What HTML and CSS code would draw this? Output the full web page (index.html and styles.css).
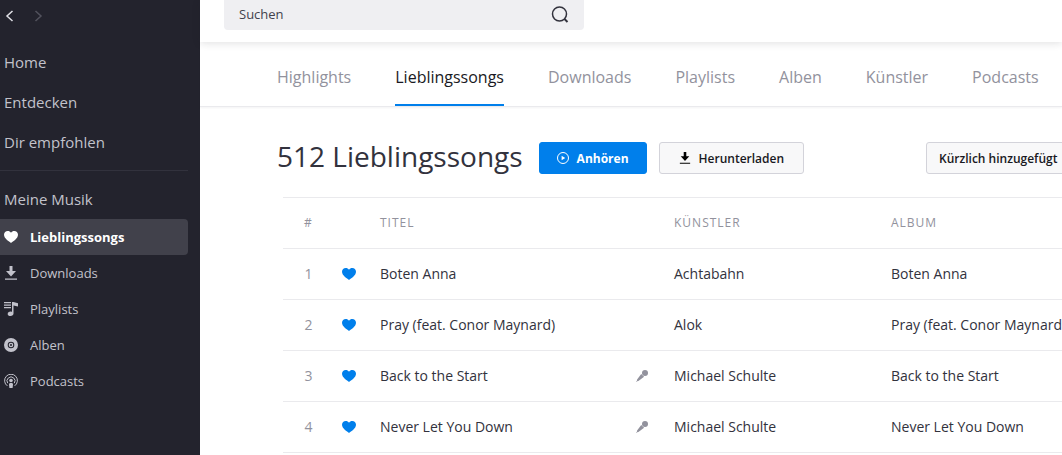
FILE: index.html
```html
<!DOCTYPE html>
<html lang="de">
<head>
    <meta charset="UTF-8">
    <meta name="viewport" content="width=device-width, initial-scale=1.0">
    <title>Lieblingssongs</title>
    <link rel="stylesheet" href="styles.css">
</head>
<body>

    <!-- Shared icons -->
    <svg class="sprite" aria-hidden="true">
        <symbol id="heart" viewBox="0 0 14 12">
            <path d="M7 12C5 10.600 0 7.500 0 3.800 0 1.500 1.700 0 3.700 0 5.100 0 6.300.700 7 1.700 7.700.700 8.900 0 10.300 0 12.300 0 14 1.500 14 3.800 14 7.500 9 10.600 7 12z"/>
        </symbol>
        <symbol id="download" viewBox="0 0 14 14">
            <path d="M5.500 0h3v5H12L7 10.500 2 5h3.500zM1 12.500h12v1.300H1z"/>
        </symbol>
        <symbol id="mic" viewBox="0 0 12 12">
            <circle cx="9" cy="3" r="3"/>
            <path d="M5.200 3.900l2.900 2.900-5.700 4.100-1.300.300L.300 12 0 11.700l.900-1 .200-1.300z"/>
        </symbol>
    </svg>

    <aside class="sidebar">
        <div class="history">
            <button type="button" aria-label="Zurück"><svg width="12" height="12" viewBox="0 0 12 12"><path d="M8.500 1L3 6l5.500 5"/></svg></button>
            <button type="button" aria-label="Vor" disabled><svg width="12" height="12" viewBox="0 0 12 12"><path d="M3.500 1L9 6l-5.500 5"/></svg></button>
        </div>

        <nav class="main-nav">
            <a href="#">Home</a>
            <a href="#">Entdecken</a>
            <a href="#">Dir empfohlen</a>
        </nav>

        <nav class="my-music">
            <a class="my-music-title" href="#">Meine Musik</a>
            <a class="item active" href="#"><svg class="icon" viewBox="0 0 14 14"><use href="#heart" x="0" y="1" width="14" height="12"/></svg>Lieblingssongs</a>
            <a class="item" href="#"><svg class="icon"><use href="#download"/></svg>Downloads</a>
            <a class="item" href="#"><svg class="icon" viewBox="0 0 14 14"><path d="M0 0h7v1.200H0zM0 2.500h7v1.200H0zM0 5h7v1.200H0zM8 0h1.500l4.500 1.200V4.500L9.500 3.400V11.500C9.500 13 8.300 14 6.500 14 4.900 14 3.700 13.200 3.700 11.900 3.700 10.500 5 9.600 6.500 9.600 7.100 9.600 7.600 9.700 8 9.900z"/></svg>Playlists</a>
            <a class="item" href="#"><svg class="icon" viewBox="0 0 14 14"><path fill-rule="evenodd" d="M7 0a7 7 0 1 1 0 14A7 7 0 0 1 7 0zM7 3.700a3.300 3.300 0 1 0 0 6.600 3.300 3.300 0 0 0 0-6.600zM7 4.700a2.300 2.300 0 1 1 0 4.600 2.300 2.300 0 0 1 0-4.600zM7 6a1 1 0 1 0 0 2 1 1 0 0 0 0-2z"/></svg>Alben</a>
            <a class="item" href="#"><svg class="icon" viewBox="0 0 14 14"><circle cx="7" cy="6.500" r="1.800"/><path d="M5 10.200C5 9.300 5.800 9 7 9s2 .300 2 1.200L8.600 14H5.400z"/><path class="wave" d="M3.400 11.900a6.400 6.400 0 1 1 7.200 0M3.700 9.200a4 4 0 1 1 6.600 0"/></svg>Podcasts</a>
        </nav>
    </aside>

    <main class="content">
        <header class="topbar">
            <form class="search">
                <input type="search" placeholder="Suchen" aria-label="Suchen">
                <button type="submit" aria-label="Suche starten"><svg width="18" height="18" viewBox="0 0 18 18"><circle cx="8.500" cy="8" r="7"/><path d="M13.500 13l3 3"/></svg></button>
            </form>
        </header>

        <nav class="tabs">
            <a href="#">Highlights</a>
            <a class="active" href="#">Lieblingssongs</a>
            <a href="#">Downloads</a>
            <a href="#">Playlists</a>
            <a href="#">Alben</a>
            <a href="#">Künstler</a>
            <a href="#">Podcasts</a>
        </nav>

        <div class="toolbar">
            <h1>512 Lieblingssongs</h1>
            <button class="btn primary" type="button"><svg width="12" height="12" viewBox="0 0 12 12"><circle cx="6" cy="6" r="5.500"/><path d="M4.600 3.800L8.200 6 4.600 8.200z"/></svg>Anhören</button>
            <button class="btn" type="button"><svg width="12" height="12"><use href="#download"/></svg>Herunterladen</button>
            <select class="btn sort" aria-label="Sortierung">
                <option>Kürzlich hinzugefügt</option>
            </select>
        </div>

        <table class="songs">
            <thead>
                <tr>
                    <th class="num">#</th>
                    <th class="fav"></th>
                    <th class="title">Titel</th>
                    <th class="lyrics"></th>
                    <th class="artist">Künstler</th>
                    <th class="album">Album</th>
                </tr>
            </thead>
            <tbody>
                <tr>
                    <td class="num">1</td>
                    <td class="fav"><button type="button" aria-label="Boten Anna entfernen"><svg class="heart"><use href="#heart"/></svg></button></td>
                    <td>Boten Anna</td>
                    <td class="lyrics"></td>
                    <td>Achtabahn</td>
                    <td>Boten Anna</td>
                </tr>
                <tr>
                    <td class="num">2</td>
                    <td class="fav"><button type="button" aria-label="Pray entfernen"><svg class="heart"><use href="#heart"/></svg></button></td>
                    <td>Pray (feat. Conor Maynard)</td>
                    <td class="lyrics"></td>
                    <td>Alok</td>
                    <td>Pray (feat. Conor Maynard)</td>
                </tr>
                <tr>
                    <td class="num">3</td>
                    <td class="fav"><button type="button" aria-label="Back to the Start entfernen"><svg class="heart"><use href="#heart"/></svg></button></td>
                    <td>Back to the Start</td>
                    <td class="lyrics"><button type="button" aria-label="Songtext"><svg class="mic"><use href="#mic"/></svg></button></td>
                    <td>Michael Schulte</td>
                    <td>Back to the Start</td>
                </tr>
                <tr>
                    <td class="num">4</td>
                    <td class="fav"><button type="button" aria-label="Never Let You Down entfernen"><svg class="heart"><use href="#heart"/></svg></button></td>
                    <td>Never Let You Down</td>
                    <td class="lyrics"><button type="button" aria-label="Songtext"><svg class="mic"><use href="#mic"/></svg></button></td>
                    <td>Michael Schulte</td>
                    <td>Never Let You Down</td>
                </tr>
            </tbody>
        </table>
    </main>

</body>
</html>
```
FILE: styles.css
```css
* {
    box-sizing: border-box;
}

body {
    margin: 0;
    display: flex;
    min-height: 100vh;
    font-family: 'Open Sans', sans-serif;
    font-size: 14px;
    color: #32323d;
    background: #fff;
    overflow: hidden;
}

a {
    color: inherit;
    text-decoration: none;
}

button, input, select {
    font-family: inherit;
}

button {
    padding: 0;
    border: none;
    background: none;
    cursor: pointer;
}

svg {
    display: block;
    flex-shrink: 0;
}

.sprite {
    position: absolute;
    width: 0;
    height: 0;
}

/* Sidebar */
.sidebar {
    flex: 0 0 200px;
    padding-right: 12px;
    background: #23232d;
    color: #c2c2cb;
}

.history {
    display: flex;
    gap: 16px;
    height: 42px;
    padding: 10px 4px;
}

.history button {
    width: 12px;
    height: 12px;
}

.history path {
    fill: none;
    stroke: #e0e0e6;
    stroke-width: 1.5;
}

.history button:disabled path {
    stroke: #52525d;
}

.main-nav {
    padding-bottom: 8px;
    border-bottom: 1px solid #32323d;
}

.main-nav a {
    display: block;
    padding-left: 4px;
    font-size: 15px;
    line-height: 40px;
}

.my-music {
    padding-top: 8px;
}

.my-music-title {
    display: block;
    padding-left: 4px;
    font-size: 15px;
    line-height: 40px;
}

.item {
    display: flex;
    align-items: center;
    gap: 12px;
    height: 36px;
    padding-left: 4px;
    font-size: 13px;
}

.item.active {
    border-radius: 0 4px 4px 0;
    background: #41414b;
    color: #fff;
    font-weight: 700;
}

.icon {
    width: 14px;
    height: 14px;
    fill: currentColor;
}

.wave {
    fill: none;
    stroke: currentColor;
}

/* Top bar with search */
.content {
    flex: 1;
    min-width: 0;
}

.topbar {
    height: 42px;
    padding: 0 24px;
    box-shadow: 0 1px 8px rgba(25, 25, 34, 0.14);
}

.search {
    display: flex;
    align-items: center;
    max-width: 360px;
    height: 30px;
    padding: 0 15px;
    border-radius: 0 0 4px 4px;
    background: #efeff2;
}

.search input {
    flex: 1;
    min-width: 0;
    padding: 0 0 2px;
    border: none;
    outline: none;
    background: none;
    font-size: 13px;
}

.search input::placeholder {
    color: #42424d;
}

.search svg {
    fill: none;
    stroke: #32323d;
    stroke-width: 1.5;
}

.search path {
    stroke-width: 2;
}

/* Tabs */
.tabs {
    display: flex;
    gap: 44px;
    height: 65px;
    padding-left: 77px;
    border-bottom: 1px solid #eaeaed;
    box-shadow: 0 1px 2px rgba(25, 25, 34, 0.05);
    font-size: 16px;
    line-height: 70px;
    color: #92929d;
}

.tabs a {
    height: 64px;
}

.tabs .active {
    border-bottom: 2px solid #007feb;
    color: #191922;
}

/* Heading and actions, the sort menu runs past the page edge */
.toolbar {
    display: flex;
    align-items: center;
    gap: 12px;
    margin: 29px -37px 0 77px;
    white-space: nowrap;
}

h1 {
    margin: 0;
    padding: 0 4px 4px 0;
    font-size: 28px;
    font-weight: 400;
    line-height: 40px;
}

.btn {
    display: flex;
    align-items: center;
    gap: 8px;
    height: 32px;
    padding: 0 19px;
    border: 1px solid #d3d3da;
    border-radius: 3px;
    background: #f8f8f9;
    color: #191922;
    font-size: 12px;
    font-weight: 600;
}

.btn.primary {
    padding: 0 17px;
    border-color: #007feb;
    background: #007feb;
    color: #fff;
    font-weight: 700;
}

.primary circle {
    fill: none;
    stroke: #fff;
}

.primary path {
    fill: #fff;
}

.btn.sort {
    margin-left: auto;
    padding: 0 40px 0 12px;
    appearance: none;
}

/* Song list */
.songs {
    width: calc(100% - 83px);
    margin: 17px 0 0 83px;
    border-top: 1px solid #eaeaed;
    border-spacing: 0;
    table-layout: fixed;
}

.songs th, .songs td {
    height: 51px;
    padding: 0 0 2px;
    border-bottom: 1px solid #eaeaed;
    text-align: left;
    white-space: nowrap;
}

.songs th {
    color: #92929d;
    font-size: 12px;
    font-weight: 400;
    letter-spacing: 1px;
    text-transform: uppercase;
}

.songs .num {
    width: 51px;
    color: #92929d;
    text-align: center;
}

.songs .fav {
    width: 46px;
    padding: 0 0 0 8px;
}

.title {
    width: 256px;
}

.songs .lyrics {
    width: 38px;
    padding: 0;
}

.artist {
    width: 217px;
}

.songs button {
    display: block;
}

.heart {
    width: 14px;
    height: 12px;
    fill: #007feb;
}

.mic {
    width: 12px;
    height: 12px;
    fill: #92929d;
}
```
